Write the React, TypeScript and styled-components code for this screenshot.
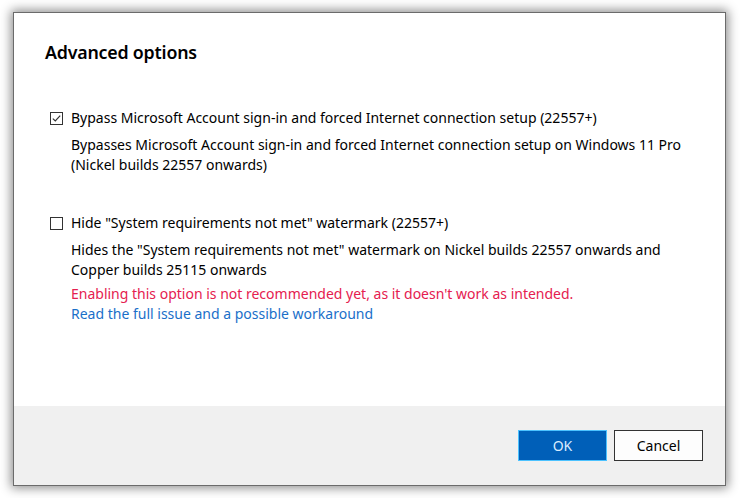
import React, { useState } from "react";
import styled, { createGlobalStyle } from "styled-components";

const Global = createGlobalStyle`
  html, body { margin: 0; padding: 0; background: #ffffff; }
  body { font-family: "Noto Sans", "Open Sans", sans-serif; }
`;

const Page = styled.div`
  width: 740px;
  height: 498px;
  padding: 12px 14px 12px 13px;
  box-sizing: border-box;
  background: #ffffff;
`;

const Window = styled.div`
  width: 713px;
  height: 474px;
  box-sizing: border-box;
  border: 1px solid #6b6b6b;
  box-shadow: 0 0 10px 2px rgba(0, 0, 0, 0.45);
  background: #ffffff;
  display: flex;
  flex-direction: column;
`;

const Body = styled.div`
  flex: 1;
  padding: 27px 0 0 31px;
  display: flex;
  flex-direction: column;
`;

const Title = styled.h1`
  margin: 0 0 44px 0;
  font-size: 17.8px;
  font-weight: 600;
  color: #000;
  line-height: 24px;
  letter-spacing: -0.2px;
`;

const Option = styled.div`
  display: flex;
  flex-direction: column;
  margin-bottom: 38px;
`;

const Label = styled.label`
  display: flex;
  align-items: center;
  gap: 8px;
  font-size: 14px;
  line-height: 20px;
  color: #000;
  padding-left: 5px;
  cursor: default;
`;

const Box = styled.span<{ $checked: boolean }>`
  width: 13px;
  height: 13px;
  box-sizing: border-box;
  border: 1px solid #333;
  background: #fff;
  display: inline-flex;
  align-items: center;
  justify-content: center;
  flex: none;
`;

const Desc = styled.div`
  padding-left: 26px;
  margin-top: 7px;
  font-size: 14px;
  line-height: 20px;
  color: #000;
`;

const Warn = styled.div`
  padding-left: 26px;
  margin-top: 4px;
  font-size: 14px;
  line-height: 20px;
  color: #e5204f;
`;

const Link = styled.a`
  padding-left: 26px;
  font-size: 14px;
  line-height: 20px;
  color: #1a6fc9;
  text-decoration: none;
  cursor: pointer;
`;

const Footer = styled.div`
  height: 79px;
  background: #f0f0f0;
  display: flex;
  justify-content: flex-end;
  align-items: flex-start;
  gap: 7px;
  padding: 24px 22px 0 0;
  box-sizing: border-box;
`;

const Button = styled.button<{ $primary?: boolean }>`
  width: 89px;
  height: 31px;
  box-sizing: border-box;
  font-family: "Noto Sans", "Open Sans", sans-serif;
  font-size: 14px;
  border: 1px solid ${(p) => (p.$primary ? "#4cc2ff" : "#333")};
  background: ${(p) => (p.$primary ? "#005fb8" : "#fdfdfd")};
  color: ${(p) => (p.$primary ? "#d9ecff" : "#000")};
  padding: 0;
`;

function Check({ checked, onClick }: { checked: boolean; onClick: () => void }) {
  return (
    <Box $checked={checked} onClick={onClick}>
      {checked && (
        <svg width="11" height="11" viewBox="0 0 11 11">
          <path d="M1.8 5.6 L4.3 8 L9.2 2.6" fill="none" stroke="#333" strokeWidth="1.2" />
        </svg>
      )}
    </Box>
  );
}

export default function App() {
  const [a, setA] = useState(true);
  const [b, setB] = useState(false);
  return (
    <>
      <Global />
      <Page>
        <Window>
          <Body>
            <Title>Advanced options</Title>
            <Option>
              <Label>
                <Check checked={a} onClick={() => setA(!a)} />
                Bypass Microsoft Account sign-in and forced Internet connection setup (22557+)
              </Label>
              <Desc>
                Bypasses Microsoft Account sign-in and forced Internet connection setup on Windows 11 Pro
                <br />
                (Nickel builds 22557 onwards)
              </Desc>
            </Option>
            <Option>
              <Label>
                <Check checked={b} onClick={() => setB(!b)} />
                Hide "System requirements not met" watermark (22557+)
              </Label>
              <Desc>
                Hides the "System requirements not met" watermark on Nickel builds 22557 onwards and
                <br />
                Copper builds 25115 onwards
              </Desc>
              <Warn>Enabling this option is not recommended yet, as it doesn't work as intended.</Warn>
              <Link>Read the full issue and a possible workaround</Link>
            </Option>
          </Body>
          <Footer>
            <Button $primary>OK</Button>
            <Button>Cancel</Button>
          </Footer>
        </Window>
      </Page>
    </>
  );
}
